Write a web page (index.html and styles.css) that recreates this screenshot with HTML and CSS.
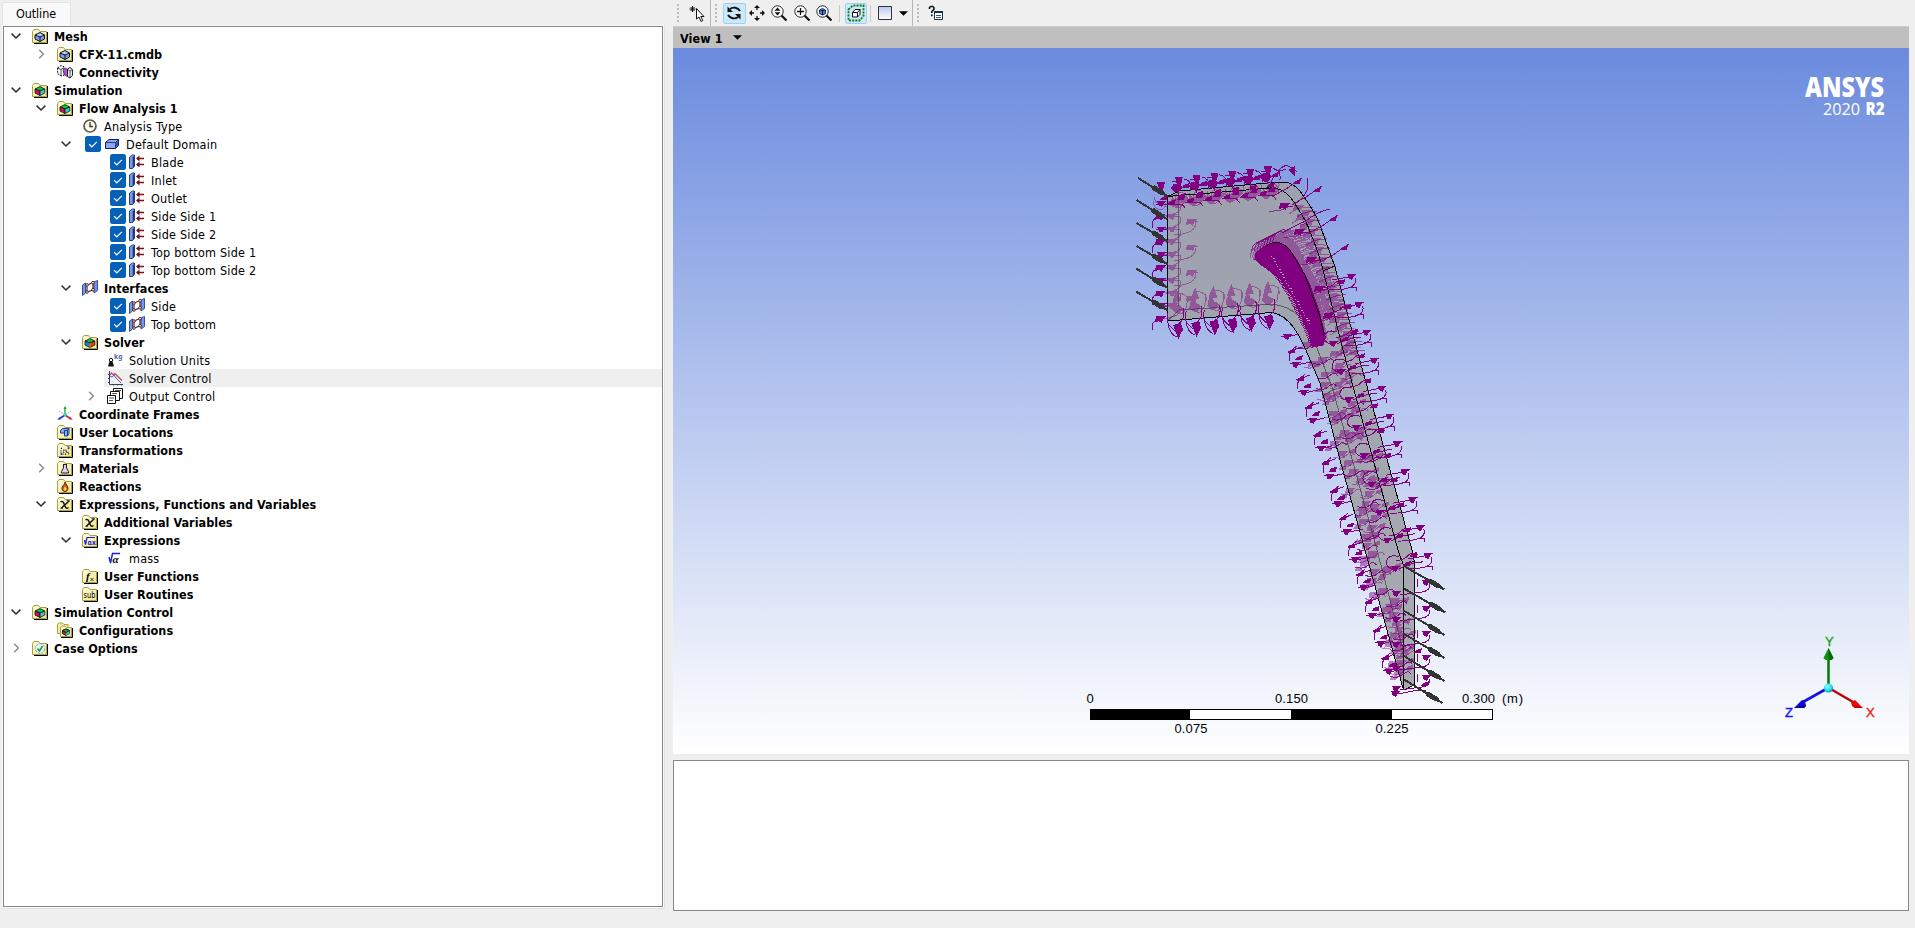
FILE: index.html
```html
<!DOCTYPE html>
<html lang="en">
<head>
<meta charset="utf-8">
<title>CFX-Pre</title>
<link rel="stylesheet" href="styles.css">
</head>
<body>
<svg class="defs" width="0" height="0" aria-hidden="true">
  <defs>
    <linearGradient id="sky" x1="0" y1="0" x2="0" y2="1"><stop offset="0" stop-color="#6b8bde"/><stop offset="1" stop-color="#fff"/></linearGradient>
    <linearGradient id="swatch" x1="0" y1="0" x2="0" y2="1"><stop offset="0" stop-color="#b9c8f2"/><stop offset="1" stop-color="#fff"/></linearGradient>
    <linearGradient id="paper" x1="0" y1="0" x2="1" y2="1"><stop offset="0" stop-color="#fffce0"/><stop offset="1" stop-color="#f0e48c"/></linearGradient>
    <radialGradient id="ball" cx=".4" cy=".35" r=".7"><stop offset="0" stop-color="#8ff"/><stop offset=".6" stop-color="#2cdde4"/><stop offset="1" stop-color="#089"/></radialGradient>
  </defs>
</svg>
<svg class="symbols" aria-hidden="true">
  <symbol id="open" viewBox="0 0 10 8"><path d="M.6 1.6 5 6l4.400-4.400" fill="none" stroke="#333" stroke-width="1.500"/></symbol>
  <symbol id="shut" viewBox="0 0 10 10"><path d="M3.200 .8 7.400 5 3.200 9.200" fill="none" stroke="#8a8a8a" stroke-width="1.400"/></symbol>
  <symbol id="check" viewBox="0 0 16 16"><rect width="16" height="16" rx="2.500" fill="#0560b8"/><path d="m4.200 8.300 2.600 2.500 5-5" fill="none" stroke="#fff" stroke-width="1.200"/></symbol>
  <symbol id="folder" viewBox="0 0 16 16"><path d="M2 15.500h13.500V4" fill="none" stroke="#000"/><path d="M.5 14.500v-11l1.500-2h4.500l1.500 2h6.500v11z" fill="url(#paper)" stroke="#a9a23c"/></symbol>
  <symbol id="cube" viewBox="0 0 16 16"><use href="#folder"/><path d="M3 7l5-2.500L12.500 7v4L8 13.500 3 11z" fill="#7b9ff0" stroke="#111"/><path d="M3 7l5 2 4.500-2M8 9v4.500" fill="none" stroke="#111"/><path d="m4.500 7 3.200-1.500L11 7 8 8.200z" fill="#b7cbff"/></symbol>
  <symbol id="rgb" viewBox="0 0 16 16"><use href="#folder"/><path d="m3 7 5-2.500L12.800 7 8 9z" fill="#0c3" stroke="#111" stroke-width=".8"/><path d="M3 7l5 2v4.500L3 11z" fill="#d0105a" stroke="#111" stroke-width=".8"/><path d="M12.800 7 8 9v4.500l4.800-2.500z" fill="#3cc8d8" stroke="#111" stroke-width=".8"/></symbol>
  <symbol id="bgr" viewBox="0 0 16 16"><use href="#folder"/><path d="m3 7 5-2.500L12.800 7 8 9z" fill="#27b93c" stroke="#111" stroke-width=".8"/><path d="M3 7l5 2v4.500L3 11z" fill="#1687e0" stroke="#111" stroke-width=".8"/><path d="M12.800 7 8 9v4.500l4.800-2.500z" fill="#e33b12" stroke="#111" stroke-width=".8"/><path d="M8 9v4.500" stroke="#eb0" stroke-width="1"/></symbol>
  <symbol id="conn" viewBox="0 0 16 16"><path d="M.6 4 4 1.500l3 1.200v8.500L4 12 .6 9.500z" fill="#fff" stroke="#111" stroke-dasharray="2 1"/><path d="M.6 4 4 5.500V12M4 5.500l3-2" fill="none" stroke="#222" stroke-width=".8"/><path d="M6 5.500 8.500 4l2 1.500v7L7.500 11z" fill="#b34be0" stroke="#426" stroke-width=".8"/><path d="M10.500 5 13 3.500l2.400 2v6L13 14l-2.500-1.500z" fill="#fff" stroke="#111"/><path d="m10.500 5.500 2.500 1.500v6.500M13 7l2.400-1.500" fill="none" stroke="#222" stroke-width=".8"/></symbol>
  <symbol id="clock" viewBox="0 0 16 16"><circle cx="8" cy="8" r="6" fill="#fffdf0" stroke="#5d5540" stroke-width="1.700"/><path d="M8 4v4.500h3" fill="none" stroke="#333" stroke-width="1.300"/></symbol>
  <symbol id="box" viewBox="0 0 16 16"><path d="M1.500 6.500 5 3.500h9.500v6l-3 3h-10z" fill="#88a8f4" stroke="#16204a"/><path d="M1.500 6.500H11.500l3-3M11.500 6.500v6" fill="none" stroke="#16204a" stroke-width=".8"/><path d="m12 7 2-2.500v4.700l-2 2.300z" fill="#3554b4"/></symbol>
  <symbol id="bc" viewBox="0 0 16 16"><path d="m.5 3 3-2h2v11l-2 2.500h-3z" fill="#7698ee" stroke="#26418c"/><path d="M3.700 3.500v11l2-2.500V1z" fill="#26376f"/><path d="M8 4.500h7M8 10.500h7" stroke="#701318" stroke-width="1.400"/><path d="m7 4.500 3.500-3v6zM7 10.500l3.500-3v6z" fill="#701318"/></symbol>
  <symbol id="iface" viewBox="0 0 16 16"><path d="m.5 5 3-2v10l-3 2.500zM12 2l3.500-1.500v10L12 13z" fill="#7598ed" stroke="#27428f" stroke-width=".9"/><path d="M5 12V5l6-2.500v7.500z" fill="#fff" stroke="#501419" stroke-width="1.100"/><g fill="#fff" stroke="#501419" stroke-width=".9"><circle cx="5" cy="5" r="1.300"/><circle cx="11" cy="2.700" r="1.300"/><circle cx="5" cy="12" r="1.300"/><circle cx="11" cy="9.700" r="1.300"/></g></symbol>
  <symbol id="units" viewBox="0 0 16 16"><path d="M2.500 9.200h3l1.500 5.300H1z" fill="#111"/><circle cx="4" cy="8" r="1.700" fill="none" stroke="#111"/><text x="7" y="7" class="tiny navy">kg</text></symbol>
  <symbol id="plot" viewBox="0 0 16 16"><path d="M2.500 1v13.500H16M1 4.500h1.500M1 8.500h1.500M1 12.500h1.500M6.500 14v1.500M10.500 14v1.500M14.500 14v1.500" fill="none" stroke="#2b4560"/><path d="m3 5 1.500-2 2 2L8 3.500l7 7" fill="none" stroke="#c33b58" stroke-width="1.200"/><path d="m3 6 2 1 2-2 2 3 5 5" fill="none" stroke="#5058c8"/></symbol>
  <symbol id="pages" viewBox="0 0 16 16"><path d="M6.500.5h9v10h-9z" fill="#fff" stroke="#111"/><path d="M3.500 3.500h9v9h-9z" fill="#fff" stroke="#111"/><path d="M.5 7.500h8v8h-8z" fill="#fff" stroke="#111"/><path d="M8 2.500h6M5 5.500h5M2 10h5M2 12.500h4" stroke="#555"/></symbol>
  <symbol id="axes" viewBox="0 0 16 16"><path d="m2 5 11 7M14 5 3 12" stroke="#aaa" stroke-dasharray="1.500 1"/><path d="M8 9V1" stroke="#18b030" stroke-width="1.400"/><path d="m8 0 1.500 3h-3z" fill="#18b030"/><path d="m8 9-6 4" stroke="#1438d0" stroke-width="1.600"/><path d="m0 14 3-3 1 2z" fill="#1438d0"/><path d="m8 9 6 4" stroke="#d02030" stroke-width="1.600"/><path d="m16 14-3-3-1 2z" fill="#d02030"/><circle cx="8" cy="9" r="1.500" fill="#39c6d0"/></symbol>
  <symbol id="loc" viewBox="0 0 16 16"><use href="#folder"/><path d="m3.500 6.500 2-2H12v5L10.500 12h-3V9h-4z" fill="#88adf5" stroke="#183f91"/><path d="M7.500 9V6.500h3L12 4.500M10.500 6.500V12" fill="none" stroke="#183f91"/></symbol>
  <symbol id="trans" viewBox="0 0 16 16"><use href="#folder"/><path d="M10 4.500h2v3M4 8v4h3" fill="none" stroke="#7c92c8" stroke-width="1.500"/><path d="m4 6 8 6M4 12.500l8-7M8 12.500l4-3" fill="none" stroke="#111" stroke-width="1.200" stroke-dasharray="1.200 1.800"/></symbol>
  <symbol id="flask" viewBox="0 0 16 16"><use href="#folder"/><path d="M6 4.500h4M6.500 5v3L4.500 11.500V13h7v-1.500L9.500 8V5" fill="#dcd3fb" stroke="#222"/></symbol>
  <symbol id="fire" viewBox="0 0 16 16"><use href="#folder"/><path d="M8 4c0 3-3.500 4-3 7 .3 1.500 1.500 2.500 3 2.500s3-1 3-3S9.500 7 8 4z" fill="#e54a13" stroke="#50200c" stroke-width=".9"/><path d="M8 8.500c-2 2-2 4 0 4.300 2-.3 2-2.300 0-4.300z" fill="#ffe14a"/></symbol>
  <symbol id="chi" viewBox="0 0 16 16"><use href="#folder"/><path d="M3.500 6c2-1.500 3 0 4 3s2 4 4 2.500M12.500 4.500 4 12.500" fill="none" stroke="#111" stroke-width="1.500"/><path d="M9.500 4.500h3M3.500 12.500H6" stroke="#3a57b0"/></symbol>
  <symbol id="root" viewBox="0 0 16 16"><use href="#folder"/><path d="m2.500 8 1 4.500 1.500-7h8" fill="none" stroke="#1020e0" stroke-width="1.200"/><text x="5.600" y="12.500" class="tiny blue">αx</text></symbol>
  <symbol id="alpha" viewBox="0 0 16 16"><path d="M2 7l1.500 6L5.500 3.500H13" fill="none" stroke="#1020e0" stroke-width="1.400"/><text x="5.500" y="13" class="alpha">α</text></symbol>
  <symbol id="fx" viewBox="0 0 16 16"><use href="#folder"/><text x="4" y="12.300" class="fx">f</text><path d="m8.500 10 3 3m0-3-3 3" stroke="#333"/></symbol>
  <symbol id="sub" viewBox="0 0 16 16"><use href="#folder"/><text x="1.600" y="12" class="subt" textLength="12" lengthAdjust="spacingAndGlyphs">sub</text></symbol>
  <symbol id="config" viewBox="0 0 16 16"><path d="M.5 11.500v-9l1-1.500h4L7 2.500h4v9z" fill="#f7efa5" stroke="#a9a23c"/><path d="M4 15.500h11.500V6" stroke="#000" fill="none"/><path d="M3.500 14.500v-9L4.500 4H8l1.500 1.500h5v9z" fill="url(#paper)" stroke="#a9a23c"/><path d="M5.500 8.500 9 7l3.500 1.500v3L9 13.500l-3.500-2z" fill="#c8203d" stroke="#111" stroke-width=".9"/><path d="M9 10.500v3l3.500-2v-3z" fill="#42c3cc"/><path d="M5.500 8.500 9 7l3.500 1.500L9 10.500z" fill="#1ab63c" stroke="#111" stroke-width=".9"/></symbol>
  <symbol id="case" viewBox="0 0 16 16"><use href="#folder"/><circle cx="8" cy="8.500" r="4.700" fill="#eef8ff" stroke="#6fa6bd" stroke-dasharray="2.500 1"/><path d="m5.500 8.500 2 2.500L10.500 6" fill="none" stroke="#159a35" stroke-width="1.500"/></symbol>
</svg>

<main class="app">
  <section class="outline">
    <div class="tab">Outline</div>
    <div class="pane">
      <div class="tree" id="tree"></div>
    </div>
  </section>

  <section class="work">
    <header class="toolbar">
      <i class="grip"></i>
      <svg class="tool pick" viewBox="0 0 16 16"><path d="M3.500 0v6M.5 3h6M1.500 1l4 4M5.500 1l-4 4" stroke="#111" fill="none"/><path d="M7.500 2.500v10.500l2.500-2 2 4.500 1.800-1-2-4H15z" fill="#fff" stroke="#111"/></svg>
      <i class="rule dark"></i>
      <i class="grip"></i>
      <span class="btn on"><svg viewBox="0 0 16 16"><path d="M14 6C12 2.500 7 1.500 4 4M2 10c2 3.500 7 4.500 10 2" fill="none" stroke="#111" stroke-width="1.900"/><path d="M1.500 1.500V7H7zM14.500 14.500V9H9z" fill="#111"/></svg></span>
      <span class="btn"><svg viewBox="0 0 16 16"><path d="M8 1v4M8 11v4M1 8h4M11 8h4" stroke="#111" stroke-width="1.300"/><path d="m8 0 3 3H5zM8 16l3-3H5zM0 8l3-3v6zM16 8l-3-3v6z" fill="#111"/></svg></span>
      <span class="btn"><svg viewBox="0 0 16 16"><circle cx="6.500" cy="6.500" r="5.700" fill="#fff" stroke="#222"/><path d="m10.500 10.500 5 5" stroke="#111" stroke-width="2.200"/><path d="m6.500 2.500 3 3.200h-6zM6.500 10.500l3-3.200h-6z" fill="#111"/></svg></span>
      <span class="btn"><svg viewBox="0 0 16 16"><circle cx="6.500" cy="6.500" r="5.700" fill="#fff" stroke="#222"/><path d="m10.500 10.500 5 5" stroke="#111" stroke-width="2.200"/><path d="M6.500 3v7M3 6.500h7" stroke="#111" stroke-width="1.300"/></svg></span>
      <span class="btn"><svg viewBox="0 0 16 16"><circle cx="6.500" cy="6.500" r="5.700" fill="#fff" stroke="#222"/><path d="m10.500 10.500 5 5" stroke="#111" stroke-width="2.200"/><path d="m3.500 5 3-1.500 3 1.500v3.500l-3 1.500-3-1.500z" fill="#4c80ea" stroke="#122f79"/><path d="M4.500 5.500h4M6.500 5.500V10" stroke="#111"/></svg></span>
      <i class="rule"></i>
      <span class="btn on box"><svg viewBox="0 0 18 18"><path d="M1.500 5.500 6 1.500h10.500V12l-4 4.500H1.500z" fill="none" stroke="#087a17" stroke-width="1.800" stroke-dasharray="2 1.200"/><path d="M5.500 8.500 8 5.500h5v5L10.500 13h-5z" fill="#fff" stroke="#111"/><path d="M5.500 8.500h5V13M10.500 8.500 13 5.500" fill="none" stroke="#111"/></svg></span>
      <i class="rule"></i>
      <svg class="tool swatch" viewBox="0 0 14 14"><path d="M.5.5h13v13H.5z" fill="url(#swatch)" stroke="#333"/></svg>
      <svg class="arrow" viewBox="0 0 10 5"><path d="M0 0h10L5 5z"/></svg>
      <i class="rule dark last"></i>
      <i class="grip"></i>
      <svg class="tool help" viewBox="0 0 16 16"><path d="M1.500 4V2.500l1.200-1h2l1.200 1v2L3.800 6.500V8M3.800 9.500v1.700" fill="none" stroke="#111" stroke-width="1.600"/><path d="M6.500 6.500h8v8h-8z" fill="#fff" stroke="#17334f"/><path d="M6 7h9" stroke="#17334f" stroke-width="2"/><path d="M8 10.500h5M8 12.500h5" stroke="#456"/></svg>
    </header>

    <div class="view-title"><b>View 1</b><svg class="arrow" viewBox="0 0 10 5"><path d="M0 0h10L5 5z"/></svg></div>

    <svg class="viewport" viewBox="673 48 1236 706" preserveAspectRatio="none">
      <rect x="673" y="48" width="1236" height="706" fill="url(#sky)"/>
      <g shape-rendering="crispEdges">
        <path d="M1167.500 196.500 1179 191 1267 183 1287 182Q1298 186 1304 197 1315 212 1320 225L1335 267 1357 350 1412 550 1414.500 562V685L1403.500 690 1365 550 1340 460 1320 383 1305 348Q1290 314 1271 312.500L1167.500 321z" fill="#a0a2a8" fill-opacity=".9"/>
        <path d="M1178.500 192V306M1167.500 321 1179 310 1260 305Q1292 300 1310 330L1333 390 1377 550 1403 650" fill="none" stroke="#444" stroke-opacity=".75"/>
        <path d="M1324 395 1335 389" stroke="#555" fill="none"/>
        <g id="faded" opacity=".45"></g>
        <path d="M1167.500 321V196.500L1270 188Q1286 187 1297 207 1306 220 1311 234 1319 254 1323 270L1343 350 1398 550 1403.500 565.500V690L1365 550 1340 460 1320 383 1305 348Q1290 314 1271 312.500zM1167.500 196.500 1179 191 1267 183 1287 182Q1298 186 1304 197 1315 212 1320 225L1335 267 1357 350 1412 550 1414.500 562V685L1403.500 690M1323 271 1335 266M1267 188 1276 182M1403.500 565.500l11-4.500" fill="none" stroke="#000"/>
        <path d="M1255 253Q1262 245 1276 242 1289 245 1298 261L1310 284 1320 312 1326 338 1323 346 1312 347 1306 327 1293 299 1279 278 1262 266 1255 260z" fill="#800080"/>
        <path d="M1266 246Q1278 237 1290 250L1305 275 1320 317 1325 339" fill="none" stroke="#111"/>
        <g id="front"></g>
        <g id="flow"></g>
      </g>

      <g class="scale">
        <rect x="1090.500" y="709.500" width="402" height="10" fill="#fff" stroke="#000"/>
        <path d="M1090 709h100v11h-100zM1291 709h101v11h-101z"/>
        <text x="1086.500" y="703">0</text><text x="1275" y="703" textLength="33">0.150</text><text x="1462" y="703" textLength="33">0.300</text><text x="1502" y="703" textLength="21">(m)</text>
        <text x="1174.500" y="733" textLength="33">0.075</text><text x="1375.500" y="733" textLength="33">0.225</text>
      </g>

      <g class="brand">
        <text x="1805" y="97" class="name" textLength="79" lengthAdjust="spacingAndGlyphs">ANSYS</text>
        <text x="1823" y="115" class="year" textLength="37" lengthAdjust="spacingAndGlyphs">2020</text>
        <text x="1865.500" y="115" class="rel" textLength="19" lengthAdjust="spacingAndGlyphs">R2</text>
      </g>

      <g class="triad">
        <path d="M1828.500 687V656" stroke="#087f0b" stroke-width="2.600"/><path d="m1828.500 648 5 10-2 2h-6l-2-2z" fill="#0b9510"/><path d="m1828.500 648 5 10-2 2h-3z" fill="#066b08"/>
        <path d="m1828 688-25 14" stroke="#1010e8" stroke-width="2.600"/><path d="m1794 708 8-8 3 1 1 5-2 2z" fill="#0a0ae0"/><path d="m1794 708 10-3 2 1-2 2z" fill="#0404a0"/>
        <path d="m1829 688 24 14" stroke="#b80808" stroke-width="2.600"/><path d="m1863 708-8-8-4 2 1 4 3 2z" fill="#ee0606"/><path d="m1863 708-11-3 3 3z" fill="#b00"/>
        <circle cx="1828.500" cy="688" r="4.500" fill="url(#ball)"/>
        <text x="1825" y="646" fill="#1da51d" stroke="#1da51d">Y</text><text x="1785" y="717" fill="#1717f0" stroke="#1717f0">Z</text><text x="1866" y="717" fill="#f01717" stroke="#f01717">X</text>
      </g>
    </svg>

    <div class="messages"></div>
  </section>
</main>
<script src="app.js"></script>
</body>
</html>
```

FILE: styles.css
```css
* { box-sizing: border-box; }

body {
  margin: 0;
  height: 928px;
  overflow: hidden;
  background: #efefef;
  color: #000;
  font: 12.5px "DejaVu Sans Condensed", "DejaVu Sans", "Noto Sans", sans-serif;
  font-stretch: condensed;
}

.defs { position: absolute; }
.symbols { display: none; }
.app { display: flex; height: 928px; }

/* Outline */
.outline { width: 665px; padding: 2px 0 0 2px; display: flex; flex-direction: column; flex: none; }
.tab {
  width: 69px; height: 23px; padding: 2px 0 0 13px;
  background: #f9f9f9; border: 1px solid #e3e3e3; border-bottom: 0;
  border-radius: 2px 2px 0 0; line-height: 17px; letter-spacing: -.1px;
}
.pane { width: 663px; height: 884px; padding: 1px 1px 2px; border: 0 solid #e2e2e2; border-width: 0 1px 1px 0; background: #f9f9f9; }
.tree { height: 881px; border: 1px solid #828790; background: #fff; width: 660px; }
.row { display: flex; align-items: center; height: 18px; padding-left: 7px; white-space: nowrap; letter-spacing: .22px; }
.row span { padding-top: 1px; }
.row.bold { font-weight: 700; letter-spacing: .04px; }
.row.depth1 { padding-left: 32px; }
.row.depth2 { padding-left: 57px; }
.row.depth3 { padding-left: 82px; }
.row.selected { background: linear-gradient(#efefef, #efefef) 100px 0 / 560px 18px no-repeat; }
.twist { width: 10px; height: 10px; margin-right: 11px; flex: none; }
.tick { width: 16px; height: 16px; margin: 0 3px 0 3px; flex: none; }
.icon { width: 16px; height: 16px; margin-right: 6px; flex: none; }

.tiny { font: 700 6.500px "Noto Sans", sans-serif; }
.navy { fill: #4a66a4; }
.blue { fill: #1020e0; }
.alpha { font: italic 700 11px "Liberation Serif", serif; }
.fx { font: italic 700 11px "Liberation Serif", serif; }
.subt { font: 400 8px "DejaVu Sans Condensed", sans-serif; }

/* Work area */
.work { margin-left: 8px; width: 1236px; display: flex; flex-direction: column; }
.toolbar { height: 27px; display: flex; align-items: center; border-bottom: 1px solid #ccc; }
.grip { width: 2px; height: 18px; margin-left: 4px; background: repeating-linear-gradient(#bbb 0 2px, transparent 2px 4px); }
.tool { flex: none; }
.pick { width: 16px; height: 16px; margin: 1px 5px 0 10px; }
.rule { width: 1px; height: 17px; margin: 0 3px; background: #c9c9c9; }
.rule.dark { height: 26px; margin: 0; background: #b7b7b7; }
.btn { width: 22.500px; height: 21px; display: grid; place-items: center; border: 1px solid transparent; border-radius: 2px; }
.btn svg { width: 16px; height: 16px; }
.btn.on { background: #cce8fb; border-color: #99d1f7; margin-left: 6px; }
.btn.box { margin-left: 2px; }
.btn.box svg { width: 18px; height: 18px; }
.swatch { width: 14px; height: 14px; margin-left: 4px; }
.arrow { width: 9px; height: 5px; }
.toolbar .arrow { margin-left: 7px; }
.rule.last { margin-left: 4px; }
.help { width: 16px; height: 16px; margin-left: 9px; }

.view-title { height: 21px; display: flex; align-items: center; padding: 1px 0 0 7px; background: #bfbfbf; letter-spacing: .1px; }
.view-title .arrow { margin: -2px 0 0 10px; }
.viewport { display: block; width: 1236px; height: 706px; flex: none; }
.messages { height: 151px; margin-top: 6px; border: 1px solid #828790; background: #fff; }

.scale { font: 13px "Liberation Sans", Arial, sans-serif; fill: #000; }
.triad { font: 400 13px "Liberation Sans", Arial, sans-serif; }
.triad text { stroke-width: .4; }
.brand { fill: #fff; }
.name { font: 800 29px "Open Sans", "Noto Sans", sans-serif; }
.year { font: 400 17px "Open Sans", sans-serif; }
.rel { font: 800 17px "Open Sans", sans-serif; }
```

FILE: app.js
```js
// label, depth, icon, flags: b = bold, o = expanded, s = collapsed, c = checkbox, h = highlighted
const items = [
  ['Mesh', 0, 'cube', 'bo'], ['CFX-11.cmdb', 1, 'cube', 'bs'], ['Connectivity', 1, 'conn', 'b'],
  ['Simulation', 0, 'rgb', 'bo'], ['Flow Analysis 1', 1, 'rgb', 'bo'], ['Analysis Type', 2, 'clock', ''],
  ['Default Domain', 2, 'box', 'oc'], ['Blade', 3, 'bc', 'c'], ['Inlet', 3, 'bc', 'c'], ['Outlet', 3, 'bc', 'c'],
  ['Side Side 1', 3, 'bc', 'c'], ['Side Side 2', 3, 'bc', 'c'], ['Top bottom Side 1', 3, 'bc', 'c'],
  ['Top bottom Side 2', 3, 'bc', 'c'], ['Interfaces', 2, 'iface', 'bo'], ['Side', 3, 'iface', 'c'],
  ['Top bottom', 3, 'iface', 'c'], ['Solver', 2, 'bgr', 'bo'], ['Solution Units', 3, 'units', ''],
  ['Solver Control', 3, 'plot', 'h'], ['Output Control', 3, 'pages', 's'], ['Coordinate Frames', 1, 'axes', 'b'],
  ['User Locations', 1, 'loc', 'b'], ['Transformations', 1, 'trans', 'b'], ['Materials', 1, 'flask', 'bs'],
  ['Reactions', 1, 'fire', 'b'], ['Expressions, Functions and Variables', 1, 'chi', 'bo'],
  ['Additional Variables', 2, 'chi', 'b'], ['Expressions', 2, 'root', 'bo'], ['mass', 3, 'alpha', ''],
  ['User Functions', 2, 'fx', 'b'], ['User Routines', 2, 'sub', 'b'], ['Simulation Control', 0, 'rgb', 'bo'],
  ['Configurations', 1, 'config', 'b'], ['Case Options', 0, 'case', 'bs']
];
const svg = (cls, id) => `<svg class="${cls}">${id ? `<use href="#${id}"/>` : ''}</svg>`;
document.getElementById('tree').innerHTML = items.map(([label, depth, icon, f]) =>
  `<div class="row depth${depth}${f.includes('b') ? ' bold' : ''}${f.includes('h') ? ' selected' : ''}">` +
  svg('twist', f.includes('o') ? 'open' : f.includes('s') ? 'shut' : '') +
  (f.includes('c') ? svg('tick', 'check') : '') + svg('icon', icon) + `<span>${label}</span></div>`).join('');

// Boundary-condition symbols
const purple = '#800080';
const line = (d, o = 1) => `<path d="${d}" fill="none" stroke="${purple}" stroke-opacity="${o}"/>`;
const solid = d => `<path d="${d}" fill="${purple}"/>`;
const down = (x, y) => solid(`M${x - 4} ${y - 4}h8l-1 5-1.500 4h-3l-1-4z`);
const blob = (x, y) => solid(`M${x - 6} ${y}l3-4h5l4 3-2 3-3 3-3-1z`);
const drop = (x, y) => solid(`M${x - 5} ${y - 6}l8-2 2 7-2 3-2.500 6-2.500-6z`);
const up = (x, y) => solid(`M${x - 4} ${y + 5}l1-5 3-7 2 6 2 6z`);
const head = (x, y) => solid(`M${x - 5} ${y - 3}h10l-3 3-1 4-3-2-4 1z`);
const wedge = (x, y) => solid(`M${x - 5} ${y - 3}l10 0-3 2-2 4-3-1z`);
const dart = (x, y) => solid(`M${x - 4} ${y + 2}l2-3 6-2-1 5z`);
const curl = (x, y, w, h) => line(`M${x} ${y}q${w * .1} ${h} ${w * .6} ${h * .8}t${w * .4} ${-h}`);

let front = '', faded = '';
for (let i = 0; i < 7; i++) {
  const x = 1161 + i * 17.800, y = 185 - i * 2.100;
  front += down(x, i ? y - 2 : y + 1);
  if (i) front += blob(x - 2, y + 5) + dart(x + 7, y + 3) + line(`M${x} ${y}v12M${x + 5} ${y - 4}q9 2 7 12M${x - 7} ${y - 1}h5`);
  front += dart(x + 3, y + 13);
  faded += curl(x - 7, y + 12, 18, 9) + curl(x + 5, y + 18, -12, 8);
}
for (let i = 0; i < 6; i++) {
  const x = 1175 + i * 18.200, y = 203 - i * 1.700, b = 329 - i * 1.700;
  faded += blob(x, y) + blob(x + 7, y - 4) + curl(x, y - 4, 12, -8) + up(x, b - 25) + up(x + 2, b - 33) + blob(x + 2, b - 20) + curl(x - 2, b - 28, 15, -9) + curl(x, b - 30, 12, 18);
  front += dart(x - 3, y - 1) + dart(x + 6, y - 5) + line(`M${x - 8} ${y + 1}h15l3 4`) + drop(x + 3, b + 2) +
    line(`M${x - 7} ${b - 6}q1 11 9 14M${x + 2} ${b - 4}q9-5 6-17M${x - 7} ${b - 16}q-3 10 4 15l3 3`);
}
for (let i = 0; i < 10; i++) {
  const y = 204 + i * 12.800;
  front += i % 2 ? head(1161, y) : wedge(1162, y);
  front += line(i % 2 ? `M1160 ${y}q-8 1-8 8v3` : `M1156 ${y}h12`);
  faded += i < 9 ? wedge(1173, y) + line(`M1166 ${y}h14q3 6-4 9t-12 3`) : '';
}
for (let i = 0; i < 4; i++) {
  const y = 222 + i * 25.500;
  faded += head(1192, y) + line(`M1196 ${y}q0 12-22 13M1190 ${y}l8-1`);
}

// bend at the inlet
front += line('M1278 172q6-10 14-4t3 2') + solid('M1288 170l7-4 0 10z') + line('M1269 186q8-18 17-16M1307 178q4 16-12 26');
[[1297, 182], [1317, 190], [1333, 219], [1344, 248]].forEach(([x, y]) => {
  front += dart(x, y) + line(`M${x + 5} ${y - 4}l-16 11q-8 4-14 8`);
});
front += line('M1330 209q-14 3-24 12-8 3-24 12');
[[1285, 206], [1300, 232], [1312, 260], [1320, 289], [1329, 316]].forEach(([x, y]) => {
  front += head(x, y) + line(`M${x + 4} ${y}q-8 6-20 5`, .7) + line(`M${x - 4} ${y}h12`);
});

const rnd = n => Math.abs(Math.sin(n * 12.990) * 43758.500) % 1;

// outer run of flags: large heads with hooked tails, small darts between them
for (let i = 0; i < 11; i++) {
  const x = 1352 + i * 7.650, y = 277 + i * 27.900;
  front += wedge(x, y) + line(`M${x - 4} ${y}l-16 3M${x + 3} ${y + 1}q2 6-4 9t-22 3M${x - 3} ${y + 10}h7v4`);
}
for (let i = 0; i < 12; i++) {
  const x = 1341 + i * 6.600, y = 282 + i * 24.800;
  front += dart(x, y) + line(`M${x - 18} ${y + 6}q9-1 12-5t10-1`);
}
// inner run of flags in front of the passage
for (let i = 0; i < 9; i++) {
  const x = 1334 + i * 7.750, y = 344 + i * 28.100;
  front += wedge(x, y) + line(`M${x - 4} ${y}q-8-3-5-9t12-3M${x + 3} ${y}q12-6 24-7`) + dart(x + 11, y - 5);
}
// left run
for (let i = 0; i < 13; i++) {
  const x = 1288 + i * 8.500, y = 337 + i * 27.900;
  front += wedge(x, y) + line(`M${x} ${y}l${10 + 6 * rnd(i)}-3M${x - 7} ${y - 1}h5`);
  if (i < 12) front += dart(x + 4, y + 14) + line(`M${x} ${y + 15}l14-5M${x + 9} ${y + 9}q-8 5-8 12v3`) + dart(x + 11, y + 21);
}
// symbols seen through the wall
for (let i = 0; i < 70; i++) {
  const t = i / 70, cx = 1329 + t * 76, cy = 345 + t * 335;
  const w = 21 * (1 - t * .6), x = cx + (rnd(i) - .5) * 2 * w, y = cy + (rnd(i + 90) - .5) * 8;
  front += line(`M${x - 10} ${y + 3}q8 3 13-2t8 0`, i % 3 ? .45 : .9);
  faded += head(x, y) + (i % 2 ? dart(x - 7, y + 5) : dart(x + 9, y - 3));
}
for (let i = 0; i < 16; i++) {
  const x = 1299 + i * 3.200, y = 208 + i * 9.300;
  faded += head(x, y) + head(x + 8, y + 5) + line(`M${x - 10} ${y + 6}q10-8 24-6`);
  front += line(`M${x - 2} ${y + 9}q8-6 20-6`, .6);
}
// hooks at the outlet
[[1427, 583], [1427, 609], [1427, 634], [1427, 658], [1427, 678]].forEach(([x, y]) => {
  front += wedge(x, y) + line(`M${x + 3} ${y + 1}q0 7-8 8t-22 3M${x - 10} ${y - 4}v8`) + wedge(1397, y + 11);
});
front += wedge(1396, 694) + line('M1398 694l20-4 8 1') + dart(1425, 684) + dart(1418, 651);

// hatching on the blade and the fan of its far side
for (let i = 0; i < 64; i++) {
  const t = i / 63, x = 1257 + 57 * Math.pow(t, .75), y = 257 + 88 * Math.pow(t, 1.250);
  front += line(`M${x - 3} ${y + 3}l${5 + 3 * rnd(i)} -3`);
  const fx = 1253 + 76 * Math.pow(t, .8), fy = 246 - 24 * Math.sin(Math.min(t * 2.600, 1.600)) + 120 * Math.pow(Math.max(t - .25, 0), 1.100);
  faded += line(`M${fx - 3} ${fy + 12}q1-13 ${14 + 8 * rnd(i)} -14`);
  if (i % 3 === 0) faded += up(fx + 4, fy + 9);
}
for (let i = 0; i < 8; i++) front += line(`M${1252 + i * 3} ${252 - i * 1.300}q-1-10 12-${11 + i * .4}`, .8);
for (let i = 0; i < 26; i++) front += `<path d="M${1271 + i * 1.500} ${256 + i * 2.700}h${1 + 2 * rnd(i)}" stroke="#a79dac"/>`;
faded += solid('M1262 243Q1280 225 1298 245L1320 300 1328 341 1319 322 1302 265 1286 242z');

document.getElementById('front').innerHTML = front;
document.getElementById('faded').innerHTML = faded;

// Flow arrows at the inlet and the outlet
const flow = (x, y, x2, y2) => {
  const a = Math.atan2(y2 - y, x2 - x) * 180 / Math.PI, l = Math.hypot(x2 - x, y2 - y);
  return `<g transform="translate(${x} ${y}) rotate(${a})"><path d="M0 0H${l}" stroke="#333" stroke-width="2"/><path d="M${l - 20} 0l3-2.500 9 0 8 2.500-8 2.500-9 0z" fill="#333"/></g>`;
};
document.getElementById('flow').innerHTML =
  [[1138, 178, 1168, 196.500], [1136.500, 200, 1167.500, 219.500], [1136.500, 223, 1168, 241.500], [1136.500, 246, 1168, 264.500], [1136, 268.500, 1168, 288], [1136, 291.500, 1168, 310.500],
   [1404, 566, 1444.500, 589.500], [1404, 588.500, 1445.500, 612.500], [1403.500, 610.500, 1444.500, 635], [1403.500, 633.500, 1444.500, 658], [1404, 656, 1444.500, 681], [1404, 679.500, 1442.500, 703]].map(p => flow(...p)).join('');
```
